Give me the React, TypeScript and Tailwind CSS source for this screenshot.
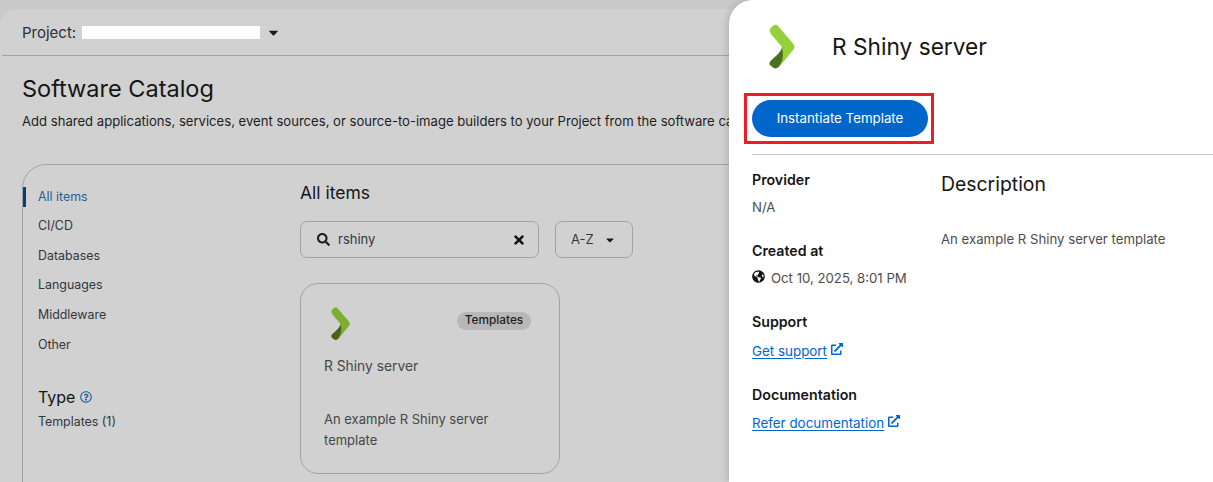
import React from 'react';
import { FaCaretDown, FaExternalLinkAlt, FaGlobeAmericas, FaRegQuestionCircle, FaSearch, FaTimes } from 'react-icons/fa';

const categories = ['CI/CD', 'Databases', 'Languages', 'Middleware', 'Other'];

const Logo: React.FC<{ className: string; light: string; dark: string }> = ({ className, light, dark }) => (
    <svg viewBox="0 0 28 45" className={className}>
        <path d="M2.5 4 L5.5 1.5 Q8 0 10 2 L25.5 20 Q27.5 23 25.5 25.5 L11 43 L10 44 C14 38 15.5 30 14 23 L2.5 9.5 Q1 6.5 2.5 4 Z" fill={light} />
        <path d="M14 23 C13 27 11 29 9 31 L2.5 37 Q0.5 39.5 2.5 41.5 L5 43.5 Q8 45.5 10.5 43 C15 38 16 30 14 23 Z" fill={dark} />
    </svg>
);

const ExternalLink: React.FC<{ label: string }> = ({ label }) => (
    <a className="flex items-center gap-1 text-[#0066cc] text-[13.4px]">
        <span className="underline underline-offset-2">{label}</span>
        <FaExternalLinkAlt className="w-3 h-3 mb-1" />
    </a>
);

export default function App() {
    return (
        <div className="relative w-[1213px] h-[482px] overflow-hidden bg-[#c9c9c9] pt-[9px] font-['Inter',sans-serif] text-[13px]">
            {/* Page behind the drawer */}
            <div className="h-[473px] rounded-tl-[16px] bg-[#d1d1d1] text-[#1d1d1d] whitespace-nowrap overflow-hidden">
                <div className="h-[47px] mx-[2px] px-5 flex items-center border-b border-[#a3a3a3] text-[15px]">
                    <span className="mt-[2px] text-[#2b2f36]">Project:</span>
                    <div className="ml-[6px] w-[178px] h-[13px] bg-white" />
                    <FaCaretDown className="ml-[6px] w-[15px] h-[15px] text-[#1a1a1a]" />
                </div>
                <div className="pl-[22px] pt-[17px]">
                    <h1 className="text-[23.5px] leading-[32px] text-[#151515]">Software Catalog</h1>
                    <p className="mt-[6px] text-[13.1px] leading-5">Add shared applications, services, event sources, or source-to-image builders to your Project from the software catalog.</p>

                    <div className="mt-[33px] h-[400px] flex border border-[#a3a3a3] rounded-[24px]">
                        {/* Filters */}
                        <div className="w-[277px] pt-[22px] text-[12.4px]">
                            <div className="h-[20px] pl-3 border-l-[3px] border-[#004080] flex items-center text-[#1f5f9e]">All items</div>
                            {categories.map((c) => (
                                <div key={c} className="pl-[15px] mt-[9.6px] h-5 flex items-center text-[#33373d]">{c}</div>
                            ))}
                            <div className="pl-[15px] mt-[32px] flex items-center gap-[5px] text-[16px] leading-5 text-[#151515]">
                                Type
                                <FaRegQuestionCircle className="w-3 h-3 text-[#1f5f9e]" />
                            </div>
                            <div className="pl-[15px] mt-[5px] leading-5 text-[#33373d]">Templates (1)</div>
                        </div>
                        {/* Results */}
                        <div className="pt-[16px]">
                            <h2 className="text-[17.5px] leading-6 text-[#151515]">All items</h2>
                            <div className="mt-4 flex gap-4">
                                <div className="w-[239px] h-[37px] pl-4 pr-3 flex items-center border border-[#a3a3a3] rounded-[7px]">
                                    <FaSearch className="w-[13px] h-[13px] text-[#1d1d1d]" />
                                    <span className="ml-2 flex-1 text-[#33373d]">rshiny</span>
                                    <FaTimes className="w-[14px] h-[14px] text-[#151515]" />
                                </div>
                                <div className="w-[78px] h-[37px] pl-[15px] flex items-center gap-[10px] border border-[#a3a3a3] rounded-[7px] text-[#33373d]">
                                    A-Z
                                    <FaCaretDown className="w-3 h-3 text-[#1a1a1a]" />
                                </div>
                            </div>
                            <div className="mt-[25px] w-[260px] h-[191px] border border-[#a3a3a3] rounded-[18px] pl-[23px] pr-[28px] pt-[22px]">
                                <div className="flex items-start justify-between">
                                    <Logo className="ml-[6px] w-[21px] h-[35px]" light="#7eaf30" dark="#47651f" />
                                    <span className="mt-[6px] h-[18px] w-[74px] flex items-center justify-center rounded-full bg-[#b8b8b8] text-[11.8px] font-medium text-[#1d1d1d]">Templates</span>
                                </div>
                                <div className="mt-[15px] leading-5 text-[13.8px] text-[#44474b]">R Shiny server</div>
                                <p className="mt-[33px] w-[200px] leading-[21px] whitespace-normal text-[#44474b]">An example R Shiny server template</p>
                            </div>
                        </div>
                    </div>
                </div>
            </div>

            {/* Details drawer, sits over the page */}
            <div className="absolute top-0 right-0 bottom-0 w-[484px] bg-white rounded-tl-[24px] pl-[23px] shadow-[-3px_0_6px_rgba(0,0,0,0.12)]">
                <div className="h-[93px] flex items-center">
                    <Logo className="ml-4 -mt-[1px] w-[28px] h-[45px]" light="#94d13a" dark="#4a6f1f" />
                    <h2 className="ml-9 text-[22.7px] leading-8 text-[#151515]">R Shiny server</h2>
                </div>
                {/* Red box around the button */}
                <div className="-ml-2 w-[190px] h-[51px] border-[3px] border-[#ee1c25] flex items-center pl-[5px]">
                    <button className="w-[176px] h-[37px] rounded-full bg-[#0066cc] text-white text-[13.3px]">Instantiate Template</button>
                </div>
                <div className="mt-[10px] border-t border-[#c7c7c7]" />
                <div className="flex text-[13.2px]">
                    <div className="w-[189px] pt-[15px]">
                        <div className="font-semibold text-[14.2px] leading-5 text-[#151515]">Provider</div>
                        <div className="mt-[7px] leading-5 text-[#4d4d4d]">N/A</div>
                        <div className="mt-[24px] font-semibold text-[14.2px] leading-5 text-[#151515]">Created at</div>
                        <div className="mt-[7px] leading-5 flex items-center gap-[6px] text-[#4d4d4d]">
                            <FaGlobeAmericas className="w-[13px] h-[13px] mb-[3px] text-[#151515]" />
                            Oct 10, 2025, 8:01 PM
                        </div>
                        <div className="mt-[24px] font-semibold text-[14.2px] leading-5 text-[#151515]">Support</div>
                        <div className="mt-[9px] leading-5"><ExternalLink label="Get support" /></div>
                        <div className="mt-[24px] font-semibold text-[14.2px] leading-5 text-[#151515]">Documentation</div>
                        <div className="mt-[8px] leading-5"><ExternalLink label="Refer documentation" /></div>
                    </div>
                    <div className="pt-[15px]">
                        <h3 className="text-[19.4px] leading-7 text-[#151515]">Description</h3>
                        <p className="mt-[31px] leading-5 text-[#4d4d4d]">An example R Shiny server template</p>
                    </div>
                </div>
            </div>
        </div>
    );
}
